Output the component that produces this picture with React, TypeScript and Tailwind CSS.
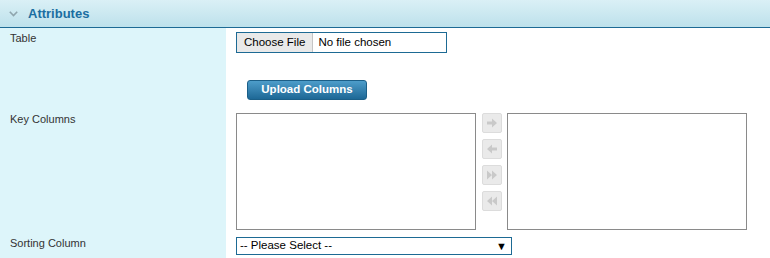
import React from "react";

const ArrowBtn = ({ d }: { d: string }) => (
  <button className="w-[20px] h-[20px] bg-[#eaeaea] border border-[#dcdcdc] rounded-[2px] flex items-center justify-center">
    <svg width="12" height="12" viewBox="0 0 12 12">
      <path d={d} fill="#c9c9c9" />
    </svg>
  </button>
);

const Label = ({ children, className = "" }: { children: React.ReactNode; className?: string }) => (
  <div className={`bg-[#ddf5fa] pl-[10px] text-[11px] text-[#333] ${className}`}>{children}</div>
);

export default function App() {
  return (
    <div className="w-[770px] h-[258px] bg-white overflow-hidden font-['Liberation_Sans',Arial,sans-serif]">
      <div className="h-[28px] border-b border-[#1d6a94] bg-gradient-to-b from-[#daf0f6] to-[#bde1eb] flex items-center pl-[9px] gap-[10px]">
        <svg width="9" height="6" viewBox="0 0 9 6">
          <path d="M0.8 0.8 L4.5 4.6 L8.2 0.8" stroke="#8fa5ad" strokeWidth="1.6" fill="none" />
        </svg>
        <span className="text-[13px] font-bold text-[#1b6ea1]">Attributes</span>
      </div>

      <div className="grid grid-cols-[226px_1fr]">
        <Label className="h-[80px] pt-[2px]">Table</Label>
        <div className="pl-[10px] pt-[4px] flex flex-col">
          <div className="w-[211px] h-[21px] border border-[#1d6a94] flex items-center text-[11.5px] text-black">
            <span className="h-full px-[7px] bg-[#e9e9e9] border-r border-[#c5c5c5] flex items-center">Choose File</span>
            <span className="pl-[5px]">No file chosen</span>
          </div>
          <button className="mt-[27px] ml-[11px] w-[120px] h-[20px] rounded-[3px] border border-[#1b5f88] bg-gradient-to-b from-[#4d9dca] to-[#1d6896] text-white text-[11.5px] font-bold">
            Upload Columns
          </button>
        </div>

        <Label className="h-[125px] pt-[3px]">Key Columns</Label>
        <div className="pl-[10px] pt-[5px] flex">
          <div className="w-[240px] h-[117px] border border-[#8a8a8a] bg-white" />
          <div className="ml-[6px] flex flex-col gap-[6px]">
            <ArrowBtn d="M1 4.5 H6 V1.5 L11 6 L6 10.5 V7.5 H1 Z" />
            <ArrowBtn d="M11 4.5 H6 V1.5 L1 6 L6 10.5 V7.5 H11 Z" />
            <ArrowBtn d="M1 1.5 L6 6 L1 10.5 Z M6 1.5 L11 6 L6 10.5 Z" />
            <ArrowBtn d="M11 1.5 L6 6 L11 10.5 Z M6 1.5 L1 6 L6 10.5 Z" />
          </div>
          <div className="ml-[5px] w-[240px] h-[117px] border border-[#8a8a8a] bg-white" />
        </div>

        <Label className="h-[25px] pt-[2px]">Sorting Column</Label>
        <div className="pl-[10px] pt-[4px]">
          <div className="relative w-[276px] h-[18px] border border-[#1d6a94] flex items-center pl-[3px] text-[11.5px] text-black">
            -- Please Select --
            <span className="absolute right-[4px] top-[0px] text-[11px]">▼</span>
          </div>
        </div>
      </div>
    </div>
  );
}
